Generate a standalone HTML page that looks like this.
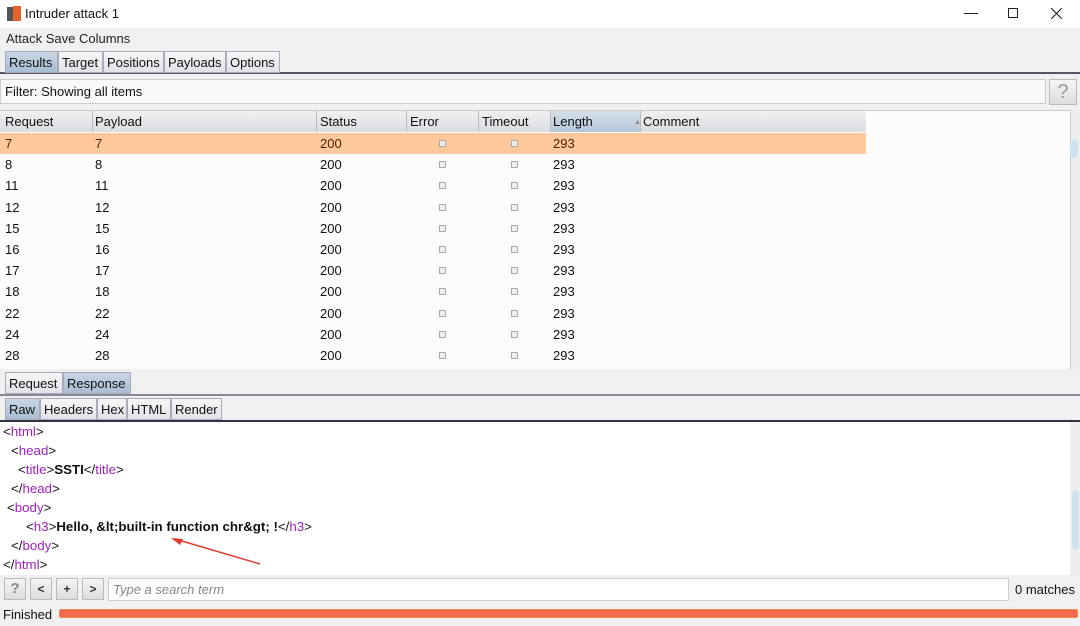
<!DOCTYPE html><html><head><style>
*{box-sizing:border-box;margin:0;padding:0}
body{width:1080px;height:626px;overflow:hidden;background:#f0f0f0;font-family:"Liberation Sans",sans-serif;font-size:13px;color:#111;position:relative}
.a{position:absolute}
.tab{position:absolute;height:22px;border:1px solid #aab;background:linear-gradient(#f6f6f8,#e2e3e8);padding:3px 3px 0;font-size:13px}
.sel{background:linear-gradient(#c8d6e6,#a9bdd3)}
.row{position:absolute;left:0;width:866px;height:21.2px;font-size:13px}
.row span{position:absolute;top:3px}
.cb{position:absolute;top:7px;width:7px;height:7px;border:1px solid #aaa;background:#eee}
.code{position:absolute;left:0;font-size:13.3px}
.t{color:#a020c0}
.btn{position:absolute;top:578px;width:22px;height:22px;border:1px solid #bbb;background:linear-gradient(#f4f4f4,#ddd);text-align:center;font-size:12px;line-height:20px;font-weight:bold;color:#333}
</style></head><body>
<div class="a" style="left:0;top:0;width:1080px;height:28px;background:#fff"></div>
<div class="a" style="left:7px;top:7px;width:7px;height:14px;background:#555"></div>
<div class="a" style="left:13px;top:6px;width:8px;height:15px;background:#e8622c"></div>
<div class="a" style="left:25px;top:6px;font-size:13px">Intruder attack 1</div>
<div class="a" style="left:964px;top:13px;width:14px;height:1px;background:#222"></div>
<div class="a" style="left:1008px;top:8px;width:10px;height:10px;border:1px solid #222"></div>
<svg class="a" style="left:1051px;top:8px" width="11" height="11"><path d="M0 0L11 11M11 0L0 11" stroke="#222" stroke-width="1.1"/></svg>
<div class="a" style="left:6px;top:31px;font-size:13px;color:#222">Attack Save Columns</div>
<div class="a" style="left:0;top:72px;width:1080px;height:2px;background:#556"></div>
<div class="tab sel" style="left:5px;top:51px;width:53px">Results</div>
<div class="tab" style="left:58px;top:51px;width:45px">Target</div>
<div class="tab" style="left:103px;top:51px;width:61px">Positions</div>
<div class="tab" style="left:164px;top:51px;width:62px">Payloads</div>
<div class="tab" style="left:226px;top:51px;width:54px">Options</div>
<div class="a" style="left:0;top:76px;width:1080px;height:34px;background:#f0f0f0"></div>
<div class="a" style="left:0;top:79px;width:1046px;height:25px;background:#f9f9f9;border:1px solid #ccc"></div>
<div class="a" style="left:5px;top:84px">Filter: Showing all items</div>
<div class="a" style="left:1049px;top:79px;width:28px;height:26px;border:1px solid #bbb;background:linear-gradient(#f4f4f4,#ddd);text-align:center;font-size:20px;color:#999;line-height:24px">?</div>
<div class="a" style="left:0;top:110px;width:1070px;height:259px;background:#fcfcfd;border-top:1px solid #ccc"></div>
<div class="a" style="left:1070px;top:110px;width:10px;height:259px;background:#eee;border-left:1px solid #ccc"></div>
<div class="a" style="left:1070px;top:140px;width:8px;height:18px;background:#cfe3ef;border-radius:4px"></div>
<div class="a" style="left:0;top:111px;width:866px;height:21px;background:linear-gradient(#f0f0f3,#dcdde2)"></div>
<div class="a" style="left:550px;top:111px;width:90px;height:21px;background:linear-gradient(#d6e0ea,#b6c7d8)"></div>
<div class="row" style="top:111px"><span style="left:5px">Request</span><span style="left:95px">Payload</span><span style="left:320px">Status</span><span style="left:410px">Error</span><span style="left:482px">Timeout</span><span style="left:553px">Length</span><span style="left:634px;font-size:7px;top:8px;color:#888">▲</span><span style="left:643px">Comment</span></div>
<div class="a" style="left:92px;top:111px;width:1px;height:21px;background:#bbb"></div><div class="a" style="left:316px;top:111px;width:1px;height:21px;background:#bbb"></div><div class="a" style="left:406px;top:111px;width:1px;height:21px;background:#bbb"></div><div class="a" style="left:478px;top:111px;width:1px;height:21px;background:#bbb"></div><div class="a" style="left:550px;top:111px;width:1px;height:21px;background:#bbb"></div><div class="a" style="left:640px;top:111px;width:1px;height:21px;background:#bbb"></div>
<div id="rows"></div>
<script>
var v=[7,8,11,12,15,16,17,18,22,24,28],h='';
v.forEach(function(n,i){h+='<div class="row" style="top:'+(133+i*21.2)+'px;'+(i==0?'background:#ffc89a;color:#4a2200':'')+'"><span style="left:5px">'+n+'</span><span style="left:95px">'+n+'</span><span style="left:320px">200</span><i class="cb" style="left:439px"></i><i class="cb" style="left:511px"></i><span style="left:553px">293</span></div>'});
document.getElementById('rows').innerHTML=h;
</script>
<div class="tab" style="left:5px;top:372px;width:58px">Request</div>
<div class="tab sel" style="left:63px;top:372px;width:68px">Response</div>
<div class="a" style="left:0;top:394px;width:1080px;height:2px;background:#889"></div>
<div class="tab sel" style="left:5px;top:398px;width:35px">Raw</div>
<div class="tab" style="left:40px;top:398px;width:57px">Headers</div>
<div class="tab" style="left:97px;top:398px;width:30px">Hex</div>
<div class="tab" style="left:127px;top:398px;width:44px">HTML</div>
<div class="tab" style="left:171px;top:398px;width:51px">Render</div>
<div class="a" style="left:0;top:420px;width:1080px;height:2px;background:#334"></div>
<div class="a" style="left:0;top:422px;width:1070px;height:153px;background:#fff"></div>
<div class="a" style="left:1070px;top:422px;width:10px;height:153px;background:#eee"></div>
<div class="a" style="left:1072px;top:490px;width:7px;height:60px;background:#cfe3ef;border-radius:4px"></div>
<div class="code" style="left:3px;top:424px">&lt;<span class="t">html</span>&gt;</div>
<div class="code" style="left:11px;top:443px">&lt;<span class="t">head</span>&gt;</div>
<div class="code" style="left:18px;top:462px">&lt;<span class="t">title</span>&gt;<b>SSTI</b>&lt;/<span class="t">title</span>&gt;</div>
<div class="code" style="left:11px;top:481px">&lt;/<span class="t">head</span>&gt;</div>
<div class="code" style="left:7px;top:500px">&lt;<span class="t">body</span>&gt;</div>
<div class="code" style="left:26px;top:519px">&lt;<span class="t">h3</span>&gt;<b>Hello, &amp;lt;built-in function chr&amp;gt; !</b>&lt;/<span class="t">h3</span>&gt;</div>
<div class="code" style="left:11px;top:538px">&lt;/<span class="t">body</span>&gt;</div>
<div class="code" style="left:3px;top:557px">&lt;/<span class="t">html</span>&gt;</div>
<svg class="a" style="left:165px;top:533px" width="100" height="35"><line x1="95" y1="31" x2="10" y2="6" stroke="#e03a2e" stroke-width="1.5"/><polygon points="6,5 18,6 15,12" fill="#e03a2e"/></svg>
<div class="btn" style="left:4px;font-size:15px;color:#888">?</div>
<div class="btn" style="left:30px">&lt;</div>
<div class="btn" style="left:56px">+</div>
<div class="btn" style="left:82px">&gt;</div>
<div class="a" style="left:108px;top:578px;width:901px;height:23px;background:#fff;border:1px solid #ccc"></div>
<div class="a" style="left:113px;top:582px;color:#888;font-style:italic">Type a search term</div>
<div class="a" style="left:1015px;top:582px">0 matches</div>
<div class="a" style="left:3px;top:607px">Finished</div>
<div class="a" style="left:59px;top:609px;width:1019px;height:9px;background:#f36b4a;border:1px solid #e85;border-radius:2px"></div>
</body></html>
